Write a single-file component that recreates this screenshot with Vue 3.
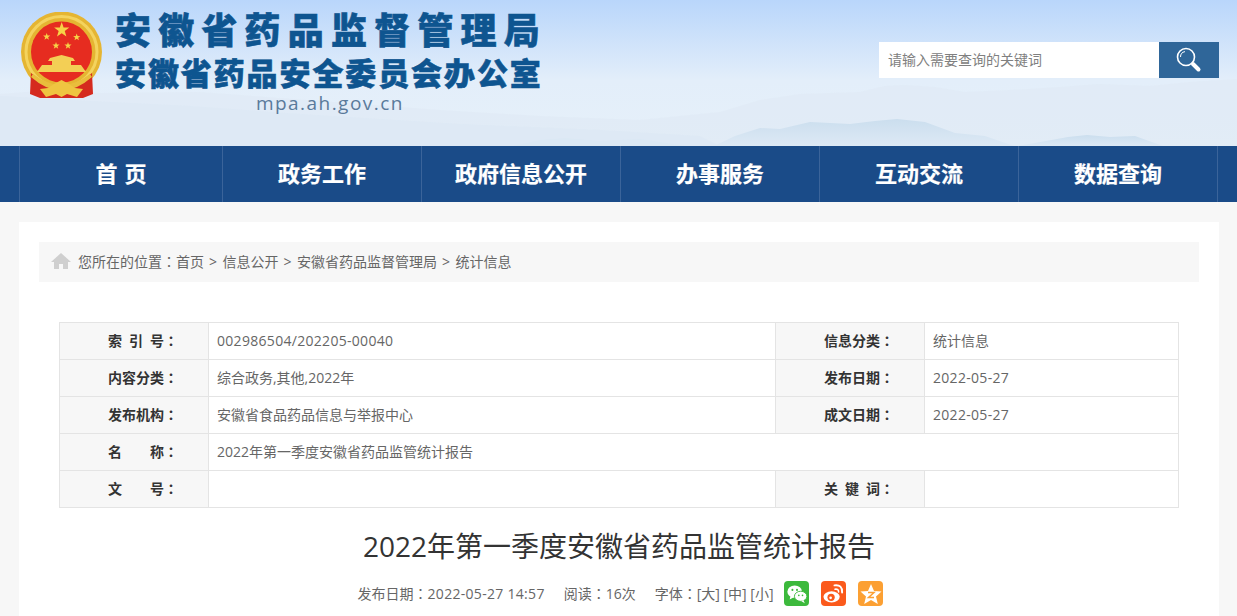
<template>
  <div class="page">
    <header class="top">
      <svg class="hills" viewBox="0 0 1237 146" preserveAspectRatio="none">
        <defs>
          <linearGradient id="fade" x1="0" y1="0" x2="0" y2="1">
            <stop offset="0" stop-color="#cbdeee" />
            <stop offset="1" stop-color="#dde9f5" />
          </linearGradient>
        </defs>
        <path d="M0 94 L40 91 L100 93 L200 92 L280 98 L360 104 L440 110 L540 116 L640 120 L720 112 L760 100 L800 94 L860 92 L885 86 L905 85 L935 87 L965 92 L1010 90 L1060 87 L1100 84 L1150 86 L1190 82 L1237 79 L1237 146 L0 146 Z" fill="#dfeaf5" opacity="0.7" />
        <path d="M0 96 L70 100 L190 106 L300 114 L460 124 L600 130 L700 136 L720 146 L0 146 Z" fill="#dbe8f4" opacity="0.65" />
        <path d="M513 146 L540 140 L565 138 L600 141 L640 139 L686 146 Z" fill="#dbe8f4" />
        <path d="M714 146 L735 136 L760 128 L780 129 L810 122 L850 124 L875 121 L897 119 L925 122 L955 133 L985 136 L1014 146 Z" fill="url(#fade)" />
        <path d="M1018 146 L1046 141 L1068 137 L1087 135 L1110 137 L1135 136 L1163 146 Z" fill="url(#fade)" />
      </svg>
      <div class="brand">
        <svg class="emblem" viewBox="0 0 81 86">
          <circle cx="40.500" cy="40" r="40.500" fill="#e5b532" />
          <circle cx="40.500" cy="40" r="35.500" fill="none" stroke="#f4d35e" stroke-width="3" />
          <circle cx="40.500" cy="40" r="30.500" fill="#e62c20" />
          <polygon :points="star(40.7, 18, 8)" fill="#f7d347" />
          <polygon :points="star(25.7, 24.7, 3.8)" fill="#f7d347" />
          <polygon :points="star(55.7, 25.3, 3.8)" fill="#f7d347" />
          <polygon :points="star(35, 33.7, 3.8)" fill="#f7d347" />
          <polygon :points="star(47, 33.7, 3.8)" fill="#f7d347" />
          <path d="M29 46 L40.500 43 L52 46 L54 49 L50 49 L50 53 L60 53 L65 60 L16 60 L21 53 L31 53 L31 49 L27 49 Z" fill="#f3cf55" />
          <path d="M10 61 Q40.500 88 71 61 L72 82 L62 86 L19 86 L9 82 Z" fill="#d52a1e" />
          <path d="M12 62 Q40.500 84 69 62 L71 65 Q40.500 92 10 65 Z" fill="#e9bd3c" />
          <path d="M40.500 68 L48 72 L54 76 L62 77 L56 85 L46 82 L40.500 85 L35 82 L25 85 L19 77 L27 76 L33 72 Z" fill="#efc541" />
        </svg>
        <div class="names">
          <div class="name-main">安徽省药品监督管理局</div>
          <div class="name-sub">安徽省药品安全委员会办公室</div>
          <div class="domain">mpa.ah.gov.cn</div>
        </div>
      </div>
      <div class="search">
        <div class="search-input">请输入需要查询的关键词</div>
        <div class="search-btn">
          <svg viewBox="0 0 28 28" width="28" height="28">
            <circle cx="11" cy="11" r="8.500" fill="none" stroke="#fff" stroke-width="1.600" />
            <path d="M5.500 11 A5.500 5.500 0 0 1 10 5.600" fill="none" stroke="#fff" stroke-width="1" />
            <path d="M18 18 L23.500 23.500" stroke="#fff" stroke-width="4" stroke-linecap="round" />
          </svg>
        </div>
      </div>
    </header>

    <nav class="nav">
      <div class="nav-inner">
        <a v-for="item in navItems" :key="item" class="nav-item">{{ item }}</a>
      </div>
    </nav>

    <main class="card">
      <div class="crumbs">
        <svg class="home" viewBox="0 0 20 18" width="20" height="18">
          <path d="M10 1 L20 10 L17 10 L17 17 L12 17 L12 12 L8 12 L8 17 L3 17 L3 10 L0 10 Z" fill="#cfcfcf" />
        </svg>
        <span>您所在的位置<span class="colon">：</span>首页</span>
        <i>&gt;</i>
        <span>信息公开</span>
        <i>&gt;</i>
        <span>安徽省药品监督管理局</span>
        <i>&gt;</i>
        <span>统计信息</span>
      </div>

      <table class="info">
        <colgroup>
          <col style="width: 149px" />
          <col style="width: 567px" />
          <col style="width: 149px" />
          <col />
        </colgroup>
        <tbody>
          <tr>
            <th>索&ensp;引&ensp;号<span class="colon">：</span></th>
            <td class="num">002986504/202205-00040</td>
            <th>信息分类<span class="colon">：</span></th>
            <td>统计信息</td>
          </tr>
          <tr>
            <th>内容分类<span class="colon">：</span></th>
            <td>综合政务,其他,2022年</td>
            <th>发布日期<span class="colon">：</span></th>
            <td class="num">2022-05-27</td>
          </tr>
          <tr>
            <th>发布机构<span class="colon">：</span></th>
            <td>安徽省食品药品信息与举报中心</td>
            <th>成文日期<span class="colon">：</span></th>
            <td class="num">2022-05-27</td>
          </tr>
          <tr>
            <th>名&emsp;&emsp;称<span class="colon">：</span></th>
            <td colspan="3">2022年第一季度安徽省药品监管统计报告</td>
          </tr>
          <tr>
            <th>文&emsp;&emsp;号<span class="colon">：</span></th>
            <td></td>
            <th>关&ensp;键&ensp;词<span class="colon">：</span></th>
            <td></td>
          </tr>
        </tbody>
      </table>

      <h1 class="title">2022年第一季度安徽省药品监管统计报告</h1>

      <div class="meta">
        <span>发布日期<span class="colon">：</span><span class="num">2022-05-27 14:57</span></span>
        <span>阅读<span class="colon">：</span>16次</span>
        <span>字体<span class="colon">：</span>[大] [中] [小]</span>
        <div class="shares">
          <div class="share wechat">
            <svg viewBox="0 0 24 24" width="22" height="22">
              <ellipse cx="9.500" cy="9.500" rx="8" ry="6.800" fill="#fff" />
              <path d="M5 14 L4 18 L8.500 15.500 Z" fill="#fff" />
              <ellipse cx="16" cy="14.500" rx="6.800" ry="5.500" fill="#fff" stroke="#3cb93c" stroke-width="1" />
              <path d="M19 18.500 L20.500 22 L16.500 19.500 Z" fill="#fff" />
              <circle cx="7" cy="7.500" r="1.100" fill="#3cb93c" />
              <circle cx="12" cy="7.500" r="1.100" fill="#3cb93c" />
              <circle cx="14" cy="13.500" r="0.900" fill="#3cb93c" />
              <circle cx="18" cy="13.500" r="0.900" fill="#3cb93c" />
            </svg>
          </div>
          <div class="share weibo">
            <svg viewBox="0 0 24 24" width="23" height="23">
              <ellipse cx="10" cy="15.500" rx="8.500" ry="5.800" fill="#fff" />
              <path d="M13 3.500 Q21.500 2.500 21 11" fill="none" stroke="#fff" stroke-width="2" stroke-linecap="round" />
              <path d="M13.500 7.500 Q17.500 7 17.300 10.500" fill="none" stroke="#fff" stroke-width="1.600" stroke-linecap="round" />
              <circle cx="9.500" cy="16" r="3.800" fill="#fb5a1c" />
              <circle cx="9" cy="16.500" r="1.400" fill="#fff" />
            </svg>
          </div>
          <div class="share qzone">
            <svg viewBox="0 0 24 24" width="24" height="24">
              <polygon points="12,2 15,9 22.500,9.500 17,14.500 18.800,22 12,18 5.200,22 7,14.500 1.500,9.500 9,9" fill="#fff" />
              <path d="M9 10.500 L15 10.500 L9.500 15.500 L15 15.500" fill="none" stroke="#fca033" stroke-width="1.500" />
            </svg>
          </div>
        </div>
      </div>
    </main>
  </div>
</template>

<script setup>
const navItems = ['首 页', '政务工作', '政府信息公开', '办事服务', '互动交流', '数据查询']

// five pointed star for the emblem
const star = (cx, cy, r) => {
  const pts = []
  for (let i = 0; i < 10; i++) {
    const rad = i % 2 === 0 ? r : r * 0.4
    const a = -Math.PI / 2 + (i * Math.PI) / 5
    pts.push((cx + rad * Math.cos(a)).toFixed(2) + ',' + (cy + rad * Math.sin(a)).toFixed(2))
  }
  return pts.join(' ')
}
</script>

<style scoped>
.page {
  height: 616px;
  overflow: hidden;
  background: #f7f7f7;
  font-family: "Open Sans", "Noto Sans CJK SC", sans-serif;
  color: #666;
}

.top {
  position: relative;
  height: 146px;
  display: flex;
  justify-content: space-between;
  padding: 0 18px 0 21px;
  box-sizing: border-box;
  background: linear-gradient(#b9d6fb, #e3eefa 55%, #e6f0f9);
}

.hills {
  position: absolute;
  left: 0;
  top: 0;
  width: 100%;
  height: 146px;
}

.brand {
  position: relative;
  display: flex;
  gap: 13px;
  padding-top: 9px;
}

.emblem {
  width: 81px;
  height: 86px;
  margin-top: 3px;
}

.names {
  width: 426px;
  color: #0e5590;
  font-family: "Noto Sans CJK SC", sans-serif;
}

.name-main {
  font-size: 36px;
  font-weight: 900;
  line-height: 38px;
  letter-spacing: 7.2px;
  white-space: nowrap;
  -webkit-text-stroke: 0.6px #0e5590;
}

.name-sub {
  font-size: 31px;
  font-weight: 900;
  line-height: 34px;
  margin-top: 8px;
  letter-spacing: 1.9px;
  white-space: nowrap;
  -webkit-text-stroke: 0.6px #0e5590;
}

.domain {
  font-family: "Open Sans", sans-serif;
  font-size: 19px;
  line-height: 24px;
  letter-spacing: 1.45px;
  color: #5a7a9b;
  padding-left: 141px;
  margin-top: 2px;
}

.search {
  position: relative;
  display: flex;
  margin-top: 42px;
  height: 36px;
}

.search-input {
  width: 280px;
  box-sizing: border-box;
  padding-left: 9px;
  background: #fff;
  font-size: 14px;
  line-height: 36px;
  color: #808080;
}

.search-btn {
  width: 60px;
  background: #2f6699;
  display: flex;
  align-items: center;
  justify-content: center;
}

.nav {
  height: 56px;
  background: #1a4b88;
  padding-left: 19px;
}

.nav-inner {
  display: grid;
  grid-template-columns: 203px repeat(5, 199px);
  width: 1198px;
  height: 56px;
  border-right: 1px solid #3b649a;
}

.nav-item {
  border-left: 1px solid #3b649a;
  color: #fff;
  font-size: 22px;
  font-weight: 700;
  line-height: 52px;
  text-align: center;
  white-space: pre;
  word-spacing: 2px;
  font-family: "Noto Sans CJK SC", sans-serif;
  -webkit-text-stroke: 0.2px #fff;
}

.card {
  width: 1200px;
  margin: 20px 0 0 19px;
  padding: 20px;
  box-sizing: border-box;
  background: #fff;
  height: 500px;
}

.crumbs {
  display: flex;
  align-items: center;
  height: 40px;
  box-sizing: border-box;
  padding: 0 0 2px 12px;
  background: #f7f7f7;
  font-size: 14px;
  color: #666;
}

.colon {
  font-family: "Noto Sans CJK TC", sans-serif;
}

.crumbs .home {
  margin-right: 7px;
}

.crumbs i {
  font-style: normal;
  margin: 0 5.5px 0 5px;
}

.info {
  width: 1120px;
  margin: 40px 0 0 20px;
  border-collapse: collapse;
  table-layout: fixed;
  font-size: 14px;
}

.info th,
.info td {
  height: 34px;
  padding: 0 0 2px;
  border: 1px solid #e4e4e4;
  box-sizing: content-box;
}

.info th {
  background: #f7f7f7;
  color: #333;
  font-weight: 700;
  text-align: left;
  padding-left: 48px;
  font-family: "Noto Sans CJK SC", sans-serif;
}

.info td {
  padding-left: 8px;
  color: #666;
}

.num {
  letter-spacing: 0.3px;
}

.title {
  margin: 20px 0 0;
  font-size: 28px;
  font-weight: 400;
  line-height: 36px;
  text-align: center;
  color: #333;
}

.meta {
  display: flex;
  align-items: center;
  justify-content: center;
  gap: 19px;
  margin-top: 16px;
  padding-left: 3px;
  font-size: 14px;
  color: #666;
}

.shares {
  display: flex;
  gap: 12px;
  margin: 1px 0 0 -8px;
}

.share {
  width: 25px;
  height: 25px;
  border-radius: 4px;
  display: flex;
  align-items: center;
  justify-content: center;
}

.wechat {
  background: #3cb93c;
}

.weibo {
  background: #fb5a1c;
}

.qzone {
  background: #fca033;
}
</style>
